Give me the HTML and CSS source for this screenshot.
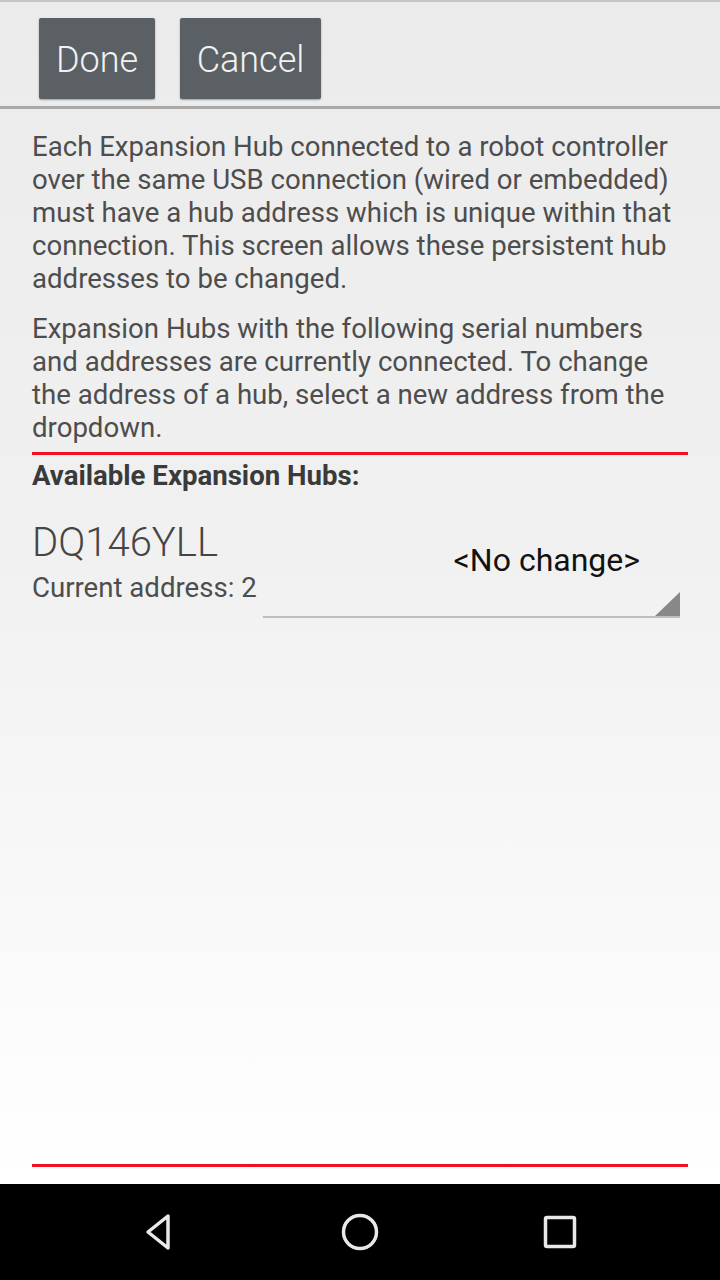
FILE: index.html
```html
<!DOCTYPE html>
<html>
<head>
<meta charset="utf-8">
<link rel="stylesheet" href="styles.css">
</head>
<body>
<div class="screen">
  <div class="topbar">
    <button class="btn btn-done">Done</button>
    <button class="btn btn-cancel">Cancel</button>
  </div>
  <div class="divider"></div>
  <div class="content">
    <p class="para p1">Each Expansion Hub connected to a robot controller over the same USB connection (wired or embedded) must have a hub address which is unique within that connection. This screen allows these persistent hub addresses to be changed.</p>
    <p class="para p2">Expansion Hubs with the following serial numbers and addresses are currently connected. To change the address of a hub, select a new address from the dropdown.</p>
    <div class="redline"></div>
    <div class="heading">Available Expansion Hubs:</div>
    <div class="hub">
      <div class="hub-info">
        <div class="serial">DQ146YLL</div>
        <div class="addr">Current address: 2</div>
      </div>
      <div class="spinner">
        <span class="spinner-text">&lt;No change&gt;</span>
        <span class="spinner-arrow"></span>
      </div>
    </div>
    <div class="spacer"></div>
    <div class="redline bottom"></div>
  </div>
  <div class="navbar">
    <svg class="nav-icon" width="40" height="40" viewBox="0 0 40 40"><path d="M32 4 L32 36 L12 20 Z" transform="translate(-4 0)" fill="none" stroke="#e8e8e8" stroke-width="3.5" stroke-linejoin="round"/></svg>
    <svg class="nav-icon" width="40" height="40" viewBox="0 0 40 40"><circle cx="20" cy="20" r="16.5" fill="none" stroke="#e8e8e8" stroke-width="3.5"/></svg>
    <svg class="nav-icon" width="40" height="40" viewBox="0 0 40 40"><rect x="5.5" y="5.5" width="29" height="29" rx="1.5" fill="none" stroke="#e8e8e8" stroke-width="3.5"/></svg>
  </div>
</div>
</body>
</html>
```

FILE: styles.css
```css
html, body {
  margin: 0;
  padding: 0;
}
body {
  width: 720px;
  height: 1280px;
  overflow: hidden;
  font-family: Roboto, "Noto Sans", sans-serif;
}
.screen {
  width: 720px;
  height: 1280px;
  display: flex;
  flex-direction: column;
  background: linear-gradient(to bottom, #ebebeb 0%, #f1f1f1 45%, #ffffff 92%);
}
.topbar {
  height: 106px;
  box-sizing: border-box;
  border-top: 2px solid #c4c4c4;
  padding: 16px 0 0 39px;
  display: flex;
  align-items: flex-start;
  gap: 25px;
}
.btn {
  height: 81px;
  border: none;
  border-radius: 2px;
  background: #5b6064;
  color: #f2f2f2;
  font-family: Roboto, sans-serif;
  font-size: 36px;
  font-weight: 300;
  padding: 3px 0 0 0;
  box-shadow: 0 1px 2px rgba(0,0,0,0.35);
}
.btn-done { width: 116px; }
.btn-cancel { width: 141px; }
.divider {
  height: 3px;
  background: #a9a9a9;
}
.content {
  flex: 1;
  display: flex;
  flex-direction: column;
  padding: 0 32px;
}
.para {
  margin: 0;
  font-size: 27.6px;
  line-height: 33px;
  color: #4d4d4d;
  font-weight: 400;
}
.p1 { margin-top: 21px; }
.p2 { margin-top: 17px; }
.redline {
  height: 3px;
  background: #f2101e;
  margin-top: 8px;
}
.heading {
  margin-top: 4px;
  font-size: 27.6px;
  line-height: 33px;
  font-weight: 700;
  color: #3a3a3a;
}
.hub {
  margin-top: 28px;
  display: flex;
  align-items: flex-start;
}
.hub-info {
  width: 231px;
}
.serial {
  font-size: 40px;
  line-height: 46px;
  font-weight: 300;
  color: #454545;
}
.addr {
  margin-top: 5px;
  font-size: 27.6px;
  line-height: 33px;
  color: #4d4d4d;
}
.spinner {
  width: 417px;
  height: 99px;
  margin-top: -1px;
  box-sizing: border-box;
  border-bottom: 2px solid #bdbdbd;
  display: flex;
  align-items: center;
  justify-content: flex-end;
  padding: 0 40px 16px 0;
  position: relative;
}
.spinner-text {
  font-size: 32px;
  color: #111;
}
.spinner-arrow {
  position: absolute;
  right: 0;
  bottom: 0;
  width: 0;
  height: 0;
  border-left: 25px solid transparent;
  border-bottom: 24px solid #888888;
}
.spacer { flex: 1; }
.redline.bottom {
  margin-top: 0;
  margin-bottom: 17px;
}
.navbar {
  height: 96px;
  background: #000;
  display: flex;
  align-items: center;
  justify-content: center;
  gap: 160px;
}
.nav-icon { display: block; }
```
